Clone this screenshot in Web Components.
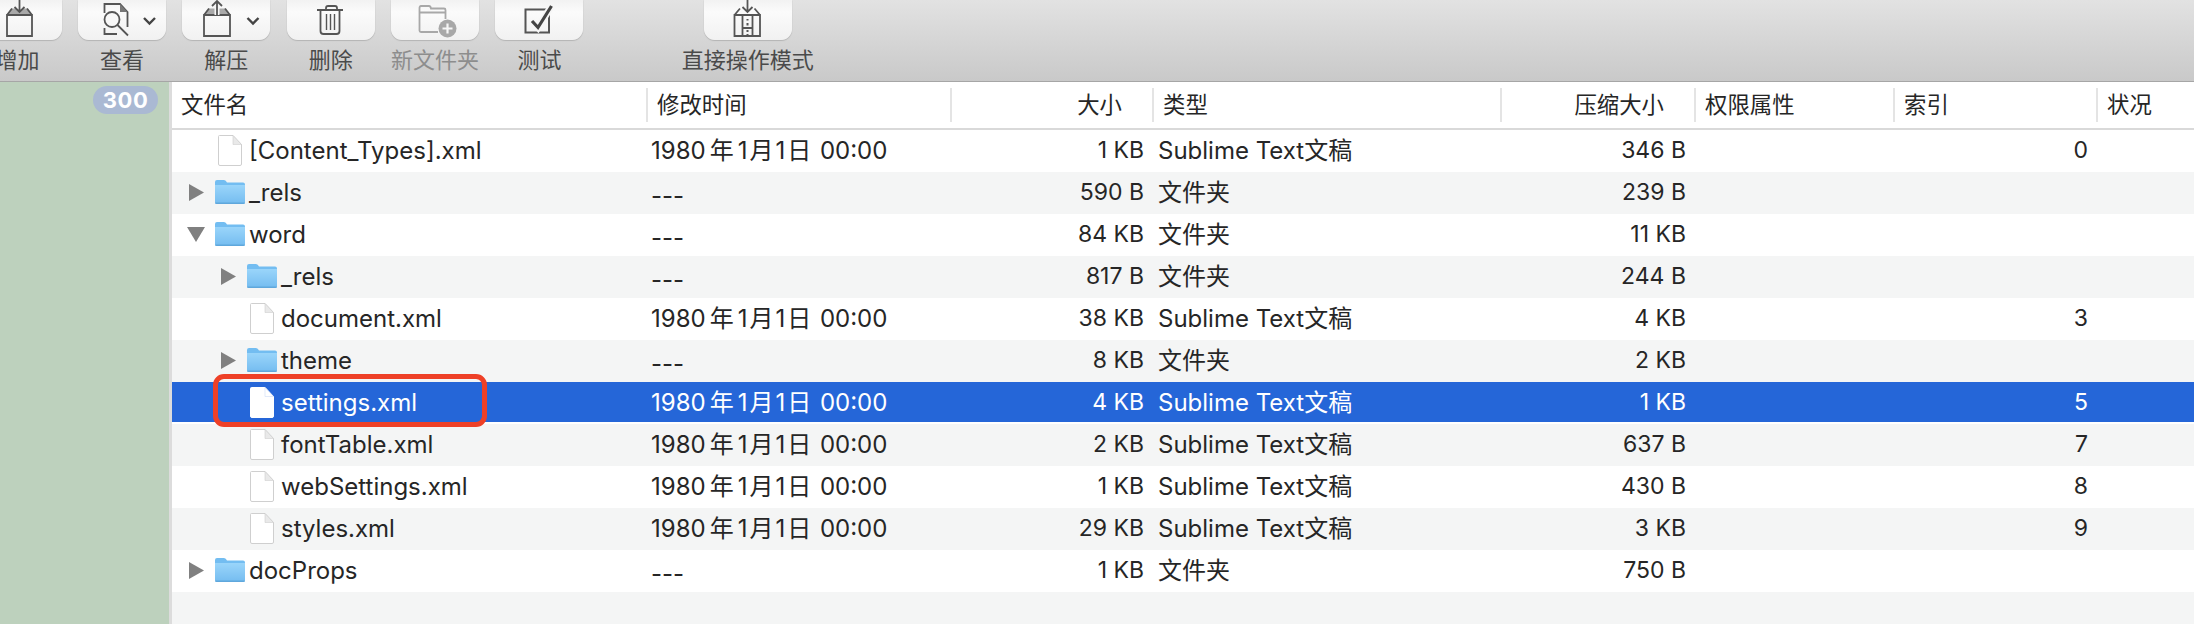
<!doctype html>
<html lang="zh">
<head>
<meta charset="utf-8">
<title>Archive</title>
<style>
  html, body { margin: 0; height: 100%; overflow: hidden; background: #fff; }
  body { font-family: Inter, "Noto Sans CJK SC", sans-serif; }
</style>
</head>
<body>
<zip-window>
  <tool-bar slot="bar">
    <tool-button icon="add" first>增加</tool-button>
    <tool-button icon="view">查看</tool-button>
    <tool-button icon="extract">解压</tool-button>
    <tool-button icon="trash">删除</tool-button>
    <tool-button icon="folder" disabled>新文件夹</tool-button>
    <tool-button icon="test">测试</tool-button>
    <tool-button icon="direct" far>直接操作模式</tool-button>
  </tool-bar>
  <side-bar slot="side">300</side-bar>
  <file-table slot="main">
    <file-row kind="file" date="1980年1月1日 00:00" size="1 KB" type="Sublime Text文稿" packed="346 B" index="0">[Content_Types].xml</file-row>
    <file-row alt kind="closed" date="---" size="590 B" type="文件夹" packed="239 B">_rels</file-row>
    <file-row kind="open" date="---" size="84 KB" type="文件夹" packed="11 KB">word</file-row>
    <file-row alt level="1" kind="closed" date="---" size="817 B" type="文件夹" packed="244 B">_rels</file-row>
    <file-row level="1" kind="file" date="1980年1月1日 00:00" size="38 KB" type="Sublime Text文稿" packed="4 KB" index="3">document.xml</file-row>
    <file-row alt level="1" kind="closed" date="---" size="8 KB" type="文件夹" packed="2 KB">theme</file-row>
    <file-row selected level="1" kind="file" date="1980年1月1日 00:00" size="4 KB" type="Sublime Text文稿" packed="1 KB" index="5">settings.xml</file-row>
    <file-row alt level="1" kind="file" date="1980年1月1日 00:00" size="2 KB" type="Sublime Text文稿" packed="637 B" index="7">fontTable.xml</file-row>
    <file-row level="1" kind="file" date="1980年1月1日 00:00" size="1 KB" type="Sublime Text文稿" packed="430 B" index="8">webSettings.xml</file-row>
    <file-row alt level="1" kind="file" date="1980年1月1日 00:00" size="29 KB" type="Sublime Text文稿" packed="3 KB" index="9">styles.xml</file-row>
    <file-row kind="closed" date="---" size="1 KB" type="文件夹" packed="750 B">docProps</file-row>
  </file-table>
</zip-window>

<script>
// column widths are shared by the header and the rows
const COLUMNS = "474px 304px 202px 348px 194px 199px 203px 98px";

// drawn in button coordinates: 88 wide, 40 tall, cut off at the top
const ICONS = {
  add: `<path d="M38 8.5L33 15h25l-5-6.500z" fill="#a9a9a9"/>
    <path d="M33 15h25v21H33zM33 15l5-6.500M58 15l-5-6.500" fill="none" stroke="#555" stroke-width="1.800"/>
    <path d="M45.500 0v11" stroke="#f6f6f6" stroke-width="5"/>
    <path d="M45.500 0v11M40.500 7l5 5 5-5" fill="none" stroke="#555" stroke-width="1.800"/>`,
  view: `<path d="M26.500 13V4H42l7.500 8v15M26.500 28v6H39" fill="none" stroke="#555" stroke-width="1.800"/>
    <path d="M42 4v8h7.500z" fill="#777"/>
    <circle cx="34" cy="19.500" r="7.500" fill="#f8f8f8" stroke="#555" stroke-width="1.800"/>
    <path d="M39.500 25L50 35.500" stroke="#555" stroke-width="1.800"/>
    <path d="M66 18l5.500 5.500L77 18" fill="none" stroke="#444" stroke-width="2.400"/>`,
  extract: `<path d="M27 8.500L22 15h26l-5-6.500z" fill="#a9a9a9"/>
    <path d="M22 15h26v21H22zM22 15l5-6.500M48 15l-5-6.500" fill="none" stroke="#555" stroke-width="1.800"/>
    <path d="M35 15V3" stroke="#f6f6f6" stroke-width="5"/>
    <path d="M35 15V1M30 6l5-5 5 5" fill="none" stroke="#555" stroke-width="1.800"/>
    <path d="M65.500 18l5.500 5.500 5.500-5.500" fill="none" stroke="#444" stroke-width="2.400"/>`,
  trash: `<path d="M30 10h26M39 9.500V8q0-2 2-2h7q2 0 2 2v1.500M33.500 10v21q0 3 3 3h13q3 0 3-3V10" fill="none" stroke="#555" stroke-width="1.800"/>
    <path d="M39.500 14v16M43.500 14v16M47.500 14v16" stroke="#555" stroke-width="1.400"/>`,
  folder: `<path d="M47 32H30q-1.500 0-1.500-1.500V8Q28.500 6 30 6h8q1.500 0 2 2.500h13q1.500 0 1.500 1.500v9M28.500 12.500H54" fill="none" stroke="#a8a8a8" stroke-width="1.800"/>
    <circle cx="56.500" cy="28.500" r="9" fill="#a8a8a8"/>
    <path d="M56.500 23.500v10M51.500 28.500h10" stroke="#f6f6f6" stroke-width="2.200"/>`,
  test: `<path d="M30.500 9.500h23.500v23H30.500z" fill="none" stroke="#555" stroke-width="2"/>
    <path d="M37 21l6 6.500L56.500 6" fill="none" stroke="#f6f6f6" stroke-width="7"/>
    <path d="M37 21l6 6.500L56.500 6" fill="none" stroke="#444" stroke-width="3.200"/>`,
  direct: `<path d="M30.500 15h25.500v21H30.500zM30.500 15l5.500-6.500M56 15l-5.500-6.500" fill="none" stroke="#555" stroke-width="1.800"/>
    <path d="M43.500 0v11" stroke="#f6f6f6" stroke-width="5"/>
    <path d="M43.500 0v11M38.500 7l5 5 5-5" fill="none" stroke="#555" stroke-width="1.800"/>
    <path d="M38.500 15v21M48.500 15v21M38.500 28h10" fill="none" stroke="#555" stroke-width="1.800"/>
    <path d="M43.500 19v1.500M43.500 23v2.500M43.500 30v2M43.500 34v2" stroke="#555" stroke-width="2"/>`,
};

customElements.define(
  "zip-window",
  class extends HTMLElement {
    connectedCallback() {
      this.attachShadow({ mode: "open" }).innerHTML = `<style>
        :host { display: grid; grid-template: 82px 1fr / 172px 1fr; height: 100vh; }
        .bar { grid-column: 1 / -1; display: block; }
        </style>
        <slot class="bar" name="bar"></slot>
        <slot name="side"></slot>
        <slot name="main"></slot>`;
    }
  }
);

customElements.define(
  "tool-bar",
  class extends HTMLElement {
    connectedCallback() {
      this.attachShadow({ mode: "open" }).innerHTML = `<style>
        :host {
          display: flex; gap: 16.400px; box-sizing: border-box; height: 82px;
          background: linear-gradient(#e2e2e2, #c9c9c9);
          border-bottom: 1px solid #a6a6a6; overflow: hidden;
        }
        </style><slot></slot>`;
    }
  }
);

customElements.define(
  "tool-button",
  class extends HTMLElement {
    connectedCallback() {
      this.attachShadow({ mode: "open" }).innerHTML = `<style>
        :host {
          display: flex; flex-direction: column; align-items: center; flex: none; width: 88px;
          font: 22px "Noto Sans CJK SC", sans-serif; color: #4a4a4a; white-space: nowrap;
        }
        :host([first]) { margin-left: -26.500px; }
        :host([far]) { margin-left: 104px; }
        :host([disabled]) { color: #8d8d8d; }
        .face {
          width: 88px; height: 40px; flex: none; box-sizing: border-box;
          background: linear-gradient(#f2f2f2, #fbfbfb 30%, #f1f1f1);
          border-radius: 0 0 11px 11px;
          box-shadow: 0 1px 1px #b4b4b4, 0 0 1px #bdbdbd;
        }
        svg { display: block; }
        .label { margin-top: 6px; line-height: 24px; }
        </style>
        <div class="face"><svg width="88" height="40" viewBox="0 0 88 40">${ICONS[this.getAttribute("icon")]}</svg></div>
        <div class="label"><slot></slot></div>`;
    }
  }
);

customElements.define(
  "side-bar",
  class extends HTMLElement {
    connectedCallback() {
      this.attachShadow({ mode: "open" }).innerHTML = `<style>
        :host {
          display: flex; justify-content: flex-end; align-items: flex-start;
          box-sizing: border-box; height: 100%;
          background: #bdd1bd; border-right: 3px solid #dcdcdc; padding: 4px 11px 0 0;
        }
        .badge {
          width: 65px; height: 28px; border-radius: 14px; background: #aab9d3;
          display: flex; align-items: center; justify-content: center;
          font: bold 22px Inter, sans-serif; letter-spacing: .6px; color: #fff;
        }
        </style><div class="badge"><slot></slot></div>`;
    }
  }
);

customElements.define(
  "file-table",
  class extends HTMLElement {
    connectedCallback() {
      this.attachShadow({ mode: "open" }).innerHTML = `<style>
        :host {
          display: block; position: relative; height: 100%; background: #f4f5f5;
          font: 24px Inter, "Noto Sans CJK SC", sans-serif; color: #262626;
        }
        .head {
          display: grid; grid-template-columns: ${COLUMNS}; height: 48px; box-sizing: border-box;
          background: #fff; border-bottom: 2px solid #d9d9d9;
          font: 22.400px "Noto Sans CJK SC", sans-serif; color: #262626;
        }
        .head div {
          display: flex; align-items: center; box-sizing: border-box; height: 34px; margin-top: 6px;
          padding: 0 0 5px 9px; white-space: nowrap;
        }
        .head div + div { border-left: 2px solid #e4e4e4; }
        .head .end { justify-content: flex-end; padding: 0 30px 5px 0; }
        .mark {
          position: absolute; left: 41px; top: 292px; width: 274px; height: 53px; box-sizing: border-box;
          border: 5px solid #ee4027; border-radius: 11px;
        }
        </style>
        <div class="head">
          <div>文件名</div><div>修改时间</div><div class="end">大小</div><div>类型</div>
          <div class="end">压缩大小</div><div>权限属性</div><div>索引</div><div>状况</div>
        </div>
        <slot></slot>
        <div class="mark"></div>`;
    }
  }
);

customElements.define(
  "file-row",
  class extends HTMLElement {
    connectedCallback() {
      const attr = (name) => this.getAttribute(name) || "";
      const kind = attr("kind");
      const level = +attr("level");
      const arrow =
        kind == "closed"
          ? '<svg width="15" height="17"><path d="M0 0l15 8.500L0 17z" fill="#808080"/></svg>'
          : kind == "open"
          ? '<svg class="down" width="18" height="15"><path d="M0 0h18L9 15z" fill="#808080"/></svg>'
          : "";
      const icon =
        kind == "file"
          ? `<svg width="24" height="31" viewBox="0 0 24 31">
              <path class="sheet" d="M1.500.500H15L23.500 9.500V29q0 1.500-1.500 1.500H2Q.5 30.500.5 29V1.500Q.5.500 1.500.500z"/>
              <path class="fold" d="M15 .5V9.500H23.500z"/></svg>`
          : `<svg width="30" height="24" viewBox="0 0 30 24">
              <defs><linearGradient id="f" x1="0" y1="0" x2="0" y2="1"><stop offset="0" stop-color="#9ad5fa"/><stop offset="1" stop-color="#74bcf0"/></linearGradient></defs>
              <path d="M0 2Q0 0 2 0h7q2 0 3 2.500h16q2 0 2 2V6H0z" fill="#73bdf1"/>
              <path d="M0 5h30v17q0 2-2 2H2q-2 0-2-2z" fill="url(#f)"/>
              <path d="M0 22.500h30v.5q0 1-2 1H2q-2 0-2-1z" fill="#5fa7dc"/></svg>`;
      // the Mac puts small gaps round the date's ideographs
      const date = attr("date")
        .replace("年", '<span class="nian">年</span>')
        .replace("月", '<span class="yue">月</span>')
        .replace("日", '<span class="ri">日</span>');
      this.attachShadow({ mode: "open" }).innerHTML = `<style>
        :host {
          display: grid; grid-template-columns: ${COLUMNS}; height: 42px; box-sizing: border-box;
          background: #fff; white-space: nowrap; align-items: center; padding-bottom: 2px;
        }
        :host([alt]) { background: #f4f5f5; }
        :host([selected]) { background: #2566d8; border-bottom: 2px solid #fff; padding-bottom: 0; color: #fff; }
        .name { display: flex; align-items: center; padding-left: ${17 + level * 32}px; }
        .arrow { width: 26px; display: flex; align-items: center; }
        .down { margin-left: -2px; }
        .icon { width: 30px; margin-right: 4px; display: flex; justify-content: center; }
        svg { display: block; }
        .sheet { fill: #fff; stroke: #cfcfcf; }
        .fold { fill: #e9e9e9; stroke: #cfcfcf; stroke-width: .6; }
        :host([selected]) .sheet { stroke: #fff; }
        :host([selected]) .fold { fill: #fff; stroke: #cfdcf5; }
        .date { padding: 0 0 3px 5px; }
        .nian { margin: 0 4px; }
        .yue { margin: 0 2px; }
        .ri { margin: 0 2px; }
        .date.dash { padding: 7px 0 0 5px; }
        .end { text-align: right; padding-right: 8px; font-size: 23px; }
        .type { padding: 0 0 3px 6px; }
        </style>
        <div class="name"><div class="arrow">${arrow}</div><div class="icon">${icon}</div><slot></slot></div>
        <div class="date ${attr("date") == "---" ? "dash" : ""}">${date}</div>
        <div class="end">${attr("size")}</div>
        <div class="type">${attr("type")}</div>
        <div class="end">${attr("packed")}</div>
        <div></div>
        <div class="end">${attr("index")}</div>
        <div></div>`;
    }
  }
);
</script>
</body>
</html>
